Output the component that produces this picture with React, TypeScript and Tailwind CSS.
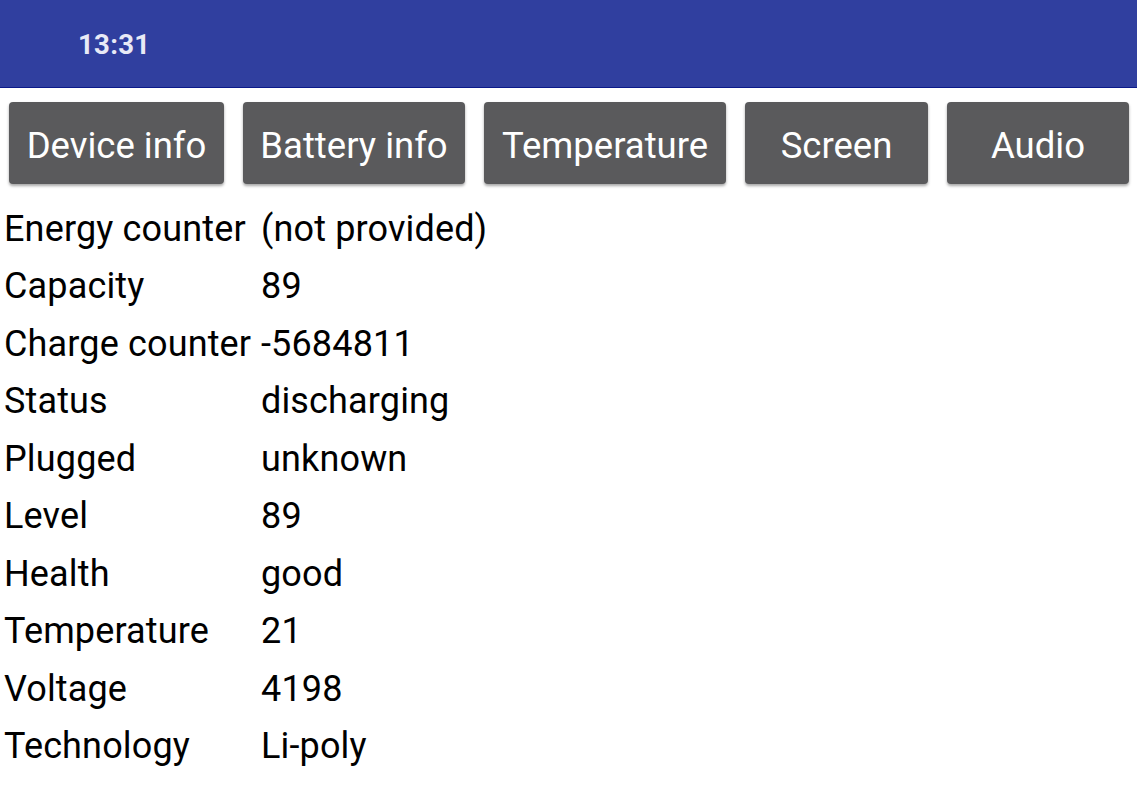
const tabs = [
  { label: "Device info", w: "w-[215px]" },
  { label: "Battery info", w: "w-[222px]" },
  { label: "Temperature", w: "w-[242px]" },
  { label: "Screen", w: "w-[183px]" },
  { label: "Audio", w: "w-[182px]" },
];

const rows: [string, string][] = [
  ["Energy counter", "(not provided)"],
  ["Capacity", "89"],
  ["Charge counter", "-5684811"],
  ["Status", "discharging"],
  ["Plugged", "unknown"],
  ["Level", "89"],
  ["Health", "good"],
  ["Temperature", "21"],
  ["Voltage", "4198"],
  ["Technology", "Li-poly"],
];

export default function App() {
  return (
    <div className="w-[1137px] h-[800px] bg-white overflow-hidden font-['Roboto',sans-serif]">
      {/* Status / app bar */}
      <div className="h-[88px] bg-[#303f9f] border-b border-[#0b1a8a] flex items-center pl-[78px] pt-[3px]">
        <span className="text-[#e8eaf6] text-[27.5px] font-bold tracking-[0.3px]">13:31</span>
      </div>

      {/* Tab buttons */}
      <div className="flex gap-[19px] pl-[9px] pt-[14px]">
        {tabs.map((t) => (
          <button
            key={t.label}
            className={`${t.w} h-[82px] bg-[#5a5a5c] rounded-[4px] shadow-[0_2px_3px_rgba(0,0,0,0.35)] text-white text-[36.5px] flex items-center justify-center pt-[6px]`}
          >
            {t.label}
          </button>
        ))}
      </div>

      {/* Battery table */}
      <div className="pl-[4px] pt-[16px] grid grid-cols-[257px_1fr] text-[36px] tracking-[0.15px] text-black">
        {rows.map(([k, v]) => (
          <div key={k} className="contents">
            <div className="h-[57.5px] flex items-center whitespace-nowrap">{k}</div>
            <div className="h-[57.5px] flex items-center whitespace-nowrap">{v}</div>
          </div>
        ))}
      </div>
    </div>
  );
}
